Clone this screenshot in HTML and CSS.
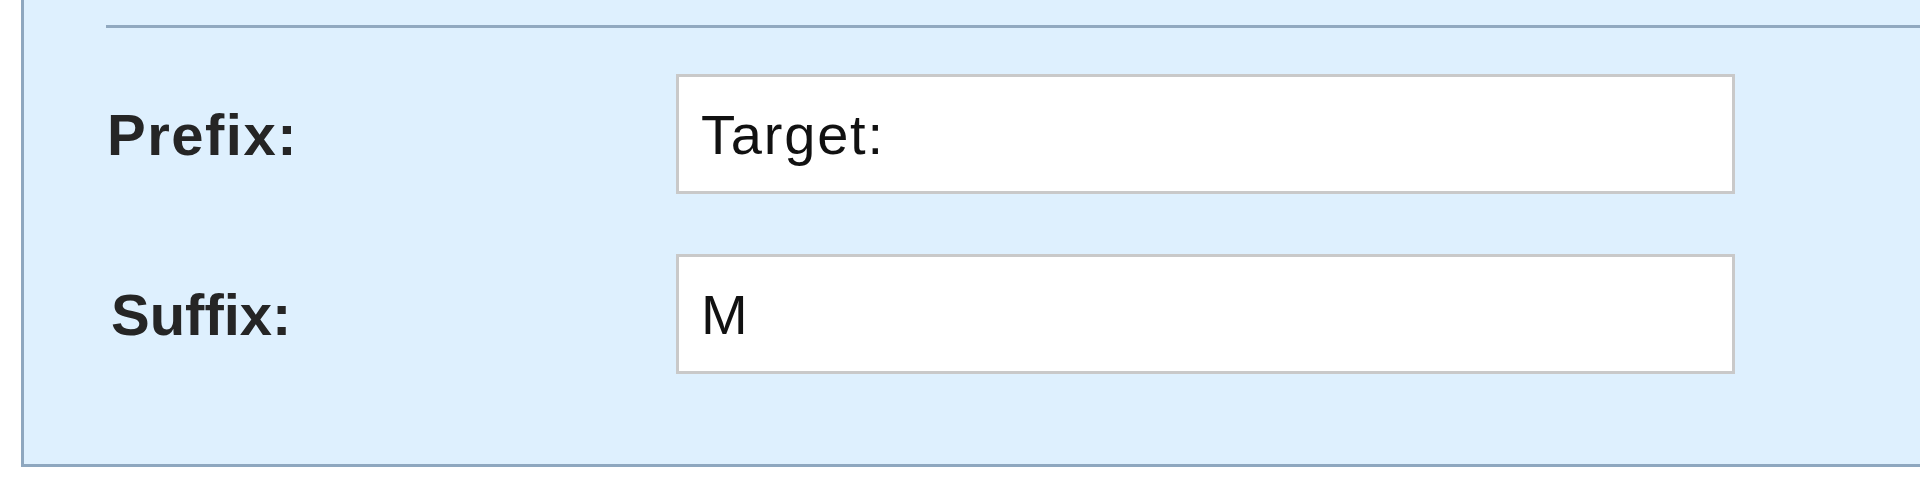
FILE: index.html
```html
<!DOCTYPE html>
<html lang="en">
<head>
<meta charset="utf-8">
<title>Prefix / Suffix</title>
<link rel="stylesheet" href="styles.css">
</head>
<body>
<div class="panel">
  <div class="rule"></div>
  <form class="form">
    <label class="label" for="prefix">Prefix:</label>
    <input class="field" id="prefix" type="text" value="Target:">
    <label class="label label-suffix" for="suffix">Suffix:</label>
    <input class="field" id="suffix" type="text" value="M">
  </form>
</div>
</body>
</html>
```

FILE: styles.css
```css
html, body {
  margin: 0;
  padding: 0;
  background: #ffffff;
  overflow: hidden;
}

.panel {
  margin-left: 21px;
  width: 1920px;
  box-sizing: border-box;
  background: #def0fe;
  border-left: 3px solid #8ea7bf;
  border-bottom: 3px solid #8ea7bf;
  padding: 25px 0 90px 82px;
}

.rule {
  height: 3px;
  background: #91a9c0;
}

.form {
  margin: 46px 0 0 0;
  display: grid;
  grid-template-columns: 570px 1059px;
  grid-auto-rows: 120px;
  row-gap: 60px;
  align-items: center;
}

.label {
  font-family: "Liberation Sans", Arial, sans-serif;
  font-weight: bold;
  font-size: 58px;
  color: #252525;
  padding-left: 1px;
  letter-spacing: 1.5px;
}

.label-suffix {
  padding-left: 5px;
  letter-spacing: 0;
}

.field {
  box-sizing: border-box;
  width: 1059px;
  height: 120px;
  margin: 0;
  border: 3px solid #c9c9c9;
  background: #ffffff;
  padding: 0 0 0 22px;
  font-family: "Liberation Sans", Arial, sans-serif;
  font-size: 56px;
  letter-spacing: 1.8px;
  color: #111111;
  outline: none;
}
```
